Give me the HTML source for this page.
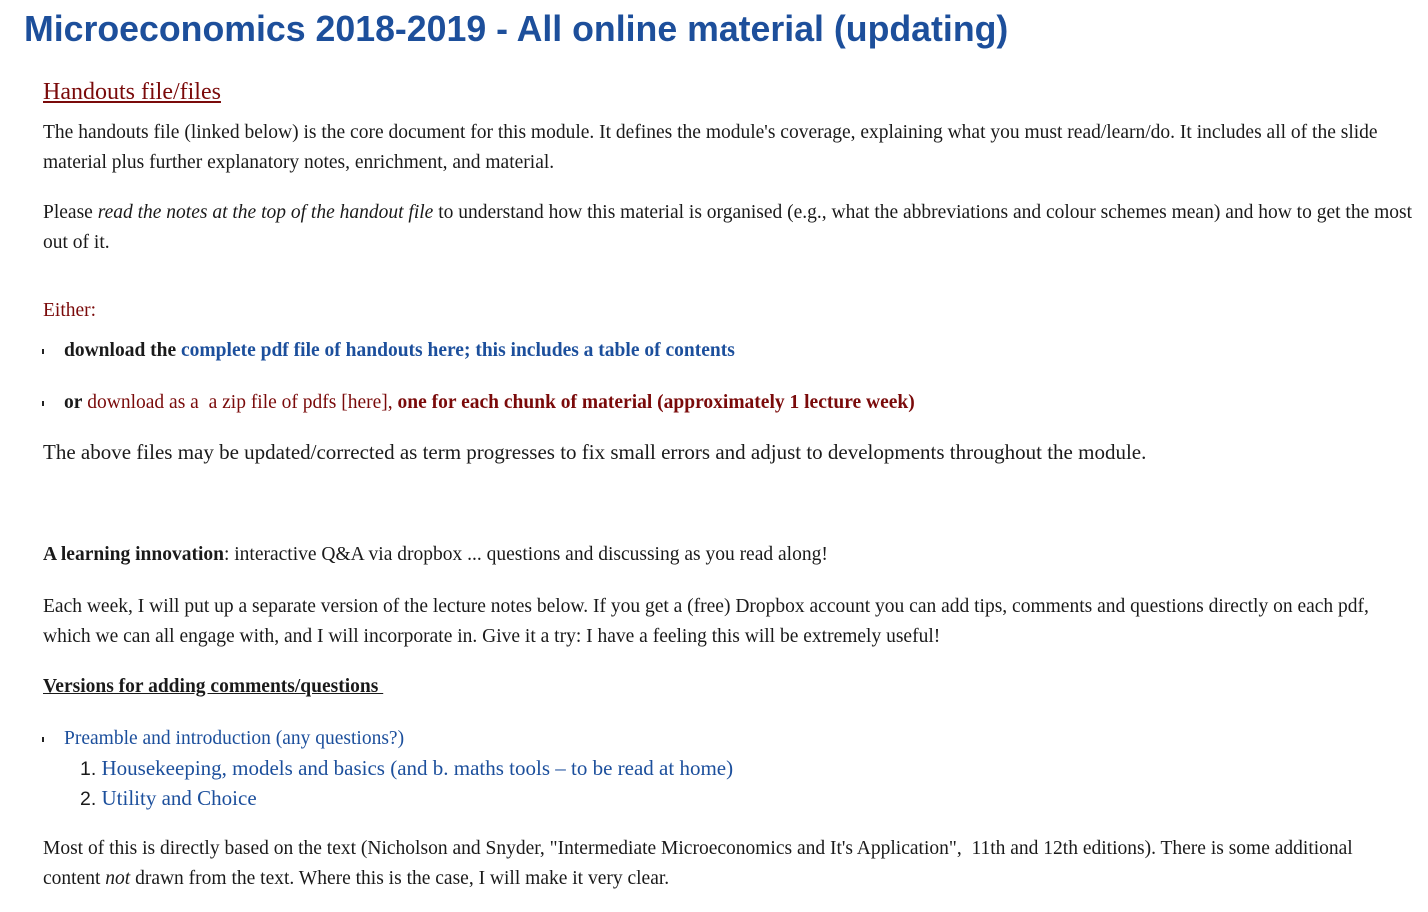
<!DOCTYPE html>
<html><head><meta charset="utf-8"><style>
body{margin:0;width:1428px;height:912px;background:#fff;overflow:hidden;position:relative;font-family:"Liberation Serif",serif;color:#1a1a1a;}
.l{position:absolute;white-space:nowrap;font-size:19.5px;line-height:24px;margin-top:2px;}
.b{color:#1c4f9c}.r{color:#7a0a0a}
.bul{position:absolute;left:42px;width:2px;height:5px;background:#222;margin-top:2px;}
h1{position:absolute;left:24px;top:7px;margin:0;font:bold 35.7px/44px "Liberation Sans",sans-serif;color:#1d4f9b;white-space:nowrap;}
</style></head><body>
<h1>Microeconomics 2018-2019 - All online material (updating)</h1>
<div class="l r" style="left:43px;top:76px;font-size:24px;line-height:28px;text-decoration:underline">Handouts file/files</div>
<div class="l" style="left:43px;top:119px">The handouts file (linked below) is the core document for this module. It defines the module's coverage, explaining what you must read/learn/do. It includes all of the slide</div>
<div class="l" style="left:43px;top:149px">material plus further explanatory notes, enrichment, and material.</div>
<div class="l" style="left:43px;top:199px">Please <i>read the notes at the top of the handout file</i> to understand how this material is organised (e.g., what the abbreviations and colour schemes mean) and how to get the most</div>
<div class="l" style="left:43px;top:229px">out of it.</div>
<div class="l r" style="left:43px;top:297px">Either:</div>
<div class="bul" style="top:347px"></div>
<div class="l" style="left:64px;top:337px"><b>download the <span class="b">complete pdf file of handouts here; this includes a table of contents</span></b></div>
<div class="bul" style="top:399px"></div>
<div class="l" style="left:64px;top:389px"><b>or</b> <span class="r">download as a &nbsp;a zip file of pdfs [here], <b>one for each chunk of material (approximately 1 lecture week)</b></span></div>
<div class="l" style="left:43px;top:438px;font-size:21px">The above files may be updated/corrected as term progresses to fix small errors and adjust to developments throughout the module.</div>
<div class="l" style="left:43px;top:541px"><b>A learning innovation</b>: interactive Q&amp;A via dropbox ... questions and discussing as you read along!</div>
<div class="l" style="left:43px;top:593px">Each week, I will put up a separate version of the lecture notes below. If you get a (free) Dropbox account you can add tips, comments and questions directly on each pdf,</div>
<div class="l" style="left:43px;top:623px">which we can all engage with, and I will incorporate in. Give it a try: I have a feeling this will be extremely useful!</div>
<div class="l" style="left:43px;top:673px;text-decoration:underline"><b>Versions for adding comments/questions&nbsp;</b></div>
<div class="bul" style="top:735px"></div>
<div class="l b" style="left:64px;top:725px">Preamble and introduction (any questions?)</div>
<div class="l" style="left:80px;top:754px;font-size:21px"><span style="font-family:'Liberation Sans',sans-serif;font-size:19.5px">1.</span> <span class="b">Housekeeping, models and basics (and b. maths tools – to be read at home)</span></div>
<div class="l" style="left:80px;top:784px;font-size:21px"><span style="font-family:'Liberation Sans',sans-serif;font-size:19.5px">2.</span> <span class="b">Utility and Choice</span></div>
<div class="l" style="left:43px;top:835px">Most of this is directly based on the text (Nicholson and Snyder, "Intermediate Microeconomics and It's Application", &nbsp;11th and 12th editions). There is some additional</div>
<div class="l" style="left:43px;top:865px">content <i>not</i> drawn from the text. Where this is the case, I will make it very clear.</div>
</body></html>
